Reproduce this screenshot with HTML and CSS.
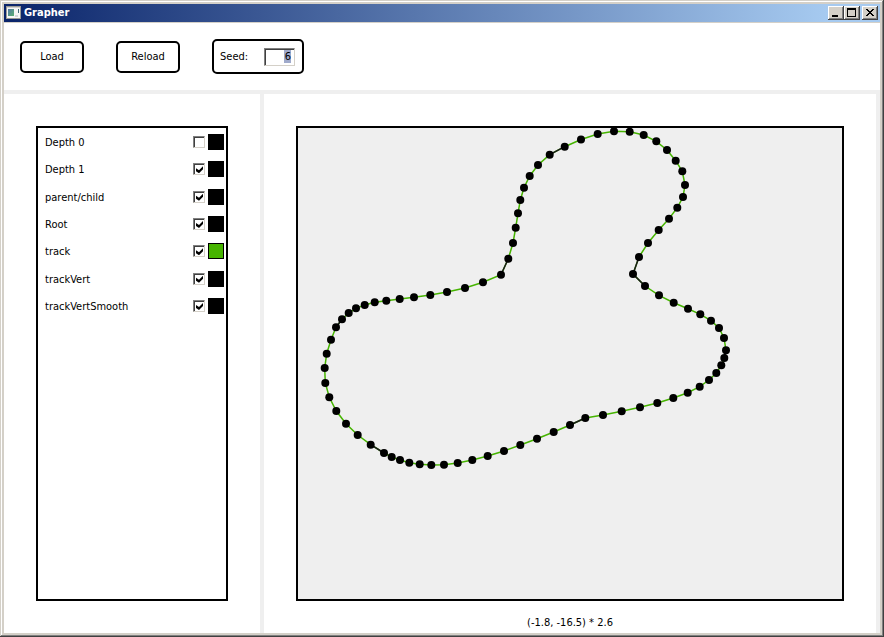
FILE: index.html
```html
<!DOCTYPE html>
<html lang="en">
<head>
<meta charset="utf-8">
<title>Grapher</title>
<link rel="stylesheet" href="styles.css">
</head>
<body>
<div class="window">
  <header class="titlebar">
    <svg class="app-icon" width="16" height="14" viewBox="0 0 16 14" aria-hidden="true">
      <defs>
        <linearGradient id="panel" x1="0" y1="0" x2="1" y2="1"><stop offset="0" stop-color="#5577a8"/><stop offset="1" stop-color="#58b070"/></linearGradient>
      </defs>
      <rect width="15" height="13" fill="#9a9a96"/>
      <rect x="1" y="1" width="13" height="11" fill="#f6f6f6"/>
      <rect x="1" y="1" width="13" height="1" fill="#d0d0d0"/>
      <rect x="2" y="3" width="6" height="7" fill="url(#panel)"/>
      <rect x="9" y="9" width="3" height="2" fill="#d4d8dc"/>
      <rect x="12" y="3" width="1" height="4" fill="#3f6a78"/>
    </svg>
    <h1 class="title">Grapher</h1>
    <div class="controls">
      <button class="control" aria-label="Minimize"><svg width="12" height="10" viewBox="0 0 12 10"><path d="M2 7h6v2H2z"/></svg></button>
      <button class="control" aria-label="Maximize"><svg width="12" height="10" viewBox="0 0 12 10"><path fill-rule="evenodd" d="M1 0h9v9H1zM2 2v6h7V2z"/></svg></button>
      <button class="control close" aria-label="Close"><svg width="12" height="10" viewBox="0 0 12 10"><path d="M2 1h2v1h1v1h2V2h1V1h2v1H9v1H8v1H7v1h1v1h1v1h1v1H8V7H7V6H5v1H4v1H2V7h1V6h1V5h1V4H4V3H3V2H2z"/></svg></button>
    </div>
  </header>
  <div class="toolbar">
    <button class="button">Load</button>
    <button class="button">Reload</button>
    <div class="seed">
      <label for="seed">Seed:</label>
      <input id="seed" class="seed-input" type="text" value="6">
    </div>
  </div>
  <main class="panes">
    <section class="pane side">
      <div class="sidebar">
        <ul class="layers">
          <li class="layer"><label for="l0">Depth 0</label><input id="l0" type="checkbox"><button class="swatch" aria-label="Depth 0 color"></button></li>
          <li class="layer"><label for="l1">Depth 1</label><input id="l1" type="checkbox" checked><button class="swatch" aria-label="Depth 1 color"></button></li>
          <li class="layer"><label for="l2">parent/child</label><input id="l2" type="checkbox" checked><button class="swatch" aria-label="parent/child color"></button></li>
          <li class="layer"><label for="l3">Root</label><input id="l3" type="checkbox" checked><button class="swatch" aria-label="Root color"></button></li>
          <li class="layer"><label for="l4">track</label><input id="l4" type="checkbox" checked><button class="swatch green" aria-label="track color"></button></li>
          <li class="layer"><label for="l5">trackVert</label><input id="l5" type="checkbox" checked><button class="swatch" aria-label="trackVert color"></button></li>
          <li class="layer"><label for="l6">trackVertSmooth</label><input id="l6" type="checkbox" checked><button class="swatch" aria-label="trackVertSmooth color"></button></li>
        </ul>
      </div>
    </section>
    <section class="pane view">
      <div class="plot">
        <svg class="graph" viewBox="298 128 544 471" aria-hidden="true">
          <defs>
            <marker id="dot" markerUnits="userSpaceOnUse" markerWidth="10" markerHeight="10" refX="5" refY="5"><circle cx="5" cy="5" r="4"/></marker>
            <polygon id="track" points="483,282.3 501,274.7 508.3,258.7 513,243 515.7,227.7 518,213.3 520.3,200 524,187.7 529.7,176 538,165 549.7,154.7 564.7,146.7 581,139.5 597.7,134 614,131.3 629.7,131.7 643.7,135 656.3,141.3 667,150 675.7,160.7 682.3,171.3 685,185 683,197 677.3,207.7 669,218.7 658.7,230 648,243 639,257 633,274 645,286 659,295.3 673.7,302.7 688,308.7 700.3,314.3 711,320.7 719,328 724,338 726,350.3 724.3,358 721.3,365.3 716.3,373 709,380 699.7,386.7 687.7,392.7 673.3,398 657.3,403 640,407.3 621.7,411.3 603,415 585.3,418 570,425 553.7,432 537,438.7 520.3,445 504,451 487.7,456 472.3,460 457.7,463 444,464.7 431.3,465 419.7,464.3 409.3,462.7 400,460 391.7,457 384,453 370.7,444.7 357.7,435 346,423.7 336.3,411 329.3,397.3 325.3,383 324.7,368 326.7,353.7 331,339.7 336,327.3 342,319.3 348.7,313 356,308.3 364.7,305 374.7,302.3 386.3,300.7 399.7,299 414,297.3 430.3,295 447,292 465,288"/>
          </defs>
          <use href="#track" class="edges"/>
          <path class="joints" d="M501 274.7L508.3 258.7M549.7 154.7L564.7 146.7M639 257L633 274L645 286M726 350.3L724.3 358M585.3 418L570 425M384 453L370.7 444.7M336 327.3L342 319.3"/>
          <use href="#track" class="nodes"/>
        </svg>
      </div>
      <p class="status">(-1.8, -16.5) * 2.6</p>
    </section>
  </main>
</div>
</body>
</html>
```
FILE: styles.css
```css
* {
  box-sizing: border-box;
}

body {
  margin: 0;
  font: 11px/16px "DejaVu Sans Condensed", "DejaVu Sans", sans-serif;
  color: #000;
}

button,
input {
  margin: 0;
  padding: 0;
  font: inherit;
  color: inherit;
}

.window {
  display: flex;
  flex-direction: column;
  min-height: 100vh;
  padding: 4px;
  background: #d4d0c8;
  box-shadow: inset -1px -1px #404040, inset 1px 1px #d4d0c8, inset -2px -2px #808080, inset 2px 2px #fff;
}

.titlebar {
  display: flex;
  align-items: center;
  height: 18px;
  margin-bottom: 1px;
  padding: 0 2px;
  background: linear-gradient(to right, #0a246a, #a6caf0 94%);
}

.title {
  flex: 1;
  margin: 0 0 0 2px;
  font-size: 11px;
  font-weight: bold;
  color: #fff;
}

.controls {
  display: flex;
}

.control {
  display: flex;
  width: 16px;
  height: 14px;
  padding: 1px;
  border: 0;
  background: #d4d0c8;
  box-shadow: inset -1px -1px #404040, inset 1px 1px #fff, inset -2px -2px #808080;
}

.control svg {
  margin: 1px;
}

.close {
  margin-left: 2px;
}

.toolbar {
  display: flex;
  align-items: center;
  gap: 32px;
  height: 67px;
  padding: 0 16px;
  background: #fff;
}

.button {
  width: 64px;
  height: 32px;
  padding-top: 1px;
  border: 2px solid #000;
  border-radius: 5px;
  background: #fff;
}

.seed {
  display: flex;
  align-items: center;
  gap: 16px;
  height: 35px;
  padding: 0 7px 0 6px;
  border: 2px solid #000;
  border-radius: 5px;
}

.seed-input {
  width: 31px;
  height: 18px;
  padding: 0 3px;
  border: 1px solid;
  border-color: #808080 #d4d0c8 #d4d0c8 #808080;
  box-shadow: inset 1px 1px #404040;
  background: linear-gradient(#a0aacb, #a0aacb) right 3px center / 7px 13px no-repeat #fff;
  text-align: right;
  outline: 0;
}

.panes {
  display: grid;
  grid-template-columns: 256px 1fr;
  flex: 1;
  gap: 4px;
  padding: 4px 4px 0 0;
  background: #efefef;
}

.pane {
  display: flex;
  flex-direction: column;
  padding: 32px;
  background: #fff;
}

.sidebar {
  flex: 1;
  padding: 6px 2px 6px 7px;
  border: 2px solid #000;
}

.layers {
  display: flex;
  flex-direction: column;
  justify-content: space-between;
  min-height: 180px;
  margin: 0;
  padding: 0;
  list-style: none;
}

.layer {
  display: flex;
  align-items: center;
  gap: 3px;
}

.layer label {
  flex: 1;
  padding-top: 1px;
  line-height: 15px;
}

.layer input {
  appearance: none;
  width: 12px;
  height: 12px;
  border: 1px solid;
  border-color: #808080 #d4d0c8 #d4d0c8 #808080;
  box-shadow: inset 1px 1px #404040;
  background: #fff;
}

.layer input:checked::before {
  content: "";
  display: block;
  width: 7px;
  height: 7px;
  margin: 2px;
  background: #000;
  clip-path: polygon(0 2px, 3px 4px, 7px 0, 7px 3px, 3px 7px, 0 5px);
}

.swatch {
  width: 16px;
  height: 16px;
  border: 1px solid #000;
  background: #000;
}

.swatch.green {
  background: #46b400;
}

.view {
  padding-bottom: 0;
}

.plot {
  display: flex;
  flex: 1;
  border: 2px solid #000;
  background: #efefef;
}

.graph {
  flex: 1;
  width: 100%;
}

.edges {
  fill: none;
  stroke: #46b400;
  stroke-width: 1.5;
}

.joints {
  fill: none;
  stroke: #1a1a1a;
  stroke-width: 1.5;
}

.nodes {
  fill: none;
  marker-start: url(#dot);
  marker-mid: url(#dot);
}

.status {
  margin: 0;
  padding: 14px 0 2px;
  text-align: center;
}
```
